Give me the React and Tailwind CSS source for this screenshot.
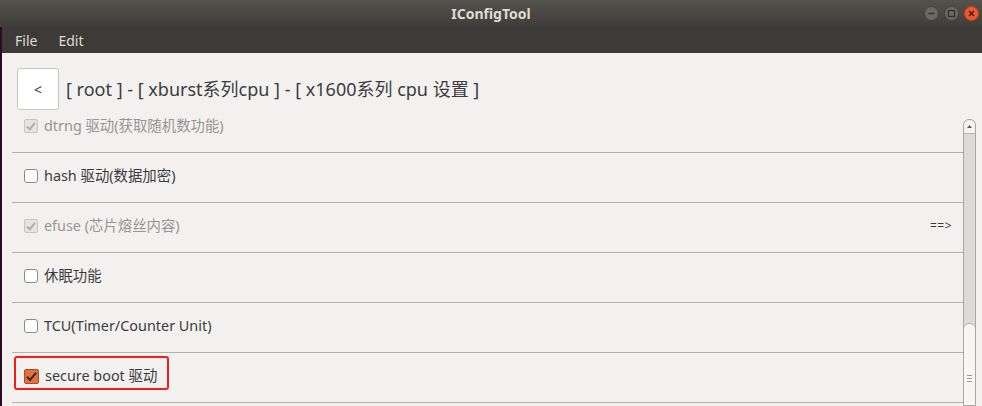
import { useState } from "react";

const rows = [
  { label: "dtrng 驱动(获取随机数功能)", checked: true, disabled: true },
  { label: "hash 驱动(数据加密)", checked: false },
  { label: "efuse (芯片熔丝内容)", checked: true, disabled: true, more: true },
  { label: "休眠功能", checked: false },
  { label: "TCU(Timer/Counter Unit)", checked: false },
  { label: "secure boot 驱动", checked: true, highlight: true },
];

const Check = ({ checked, disabled }) => {
  if (disabled) {
    return (
      <span className="w-[14px] h-[14px] rounded-[2px] border border-[#c8c6c3] bg-[#e6e4e1] flex items-center justify-center">
        <svg width="12" height="12" viewBox="0 0 12 12">
          <path d="M2 6.5 L4.8 9.2 L10 2.8" fill="none" stroke="#b0aeab" strokeWidth="2" />
        </svg>
      </span>
    );
  }
  if (checked) {
    return (
      <span className="w-[15px] h-[15px] rounded-[2px] border border-[#b8461c] bg-[#e5703f] flex items-center justify-center">
        <svg width="13" height="13" viewBox="0 0 12 12">
          <path d="M1.8 6.2 L4.6 9.2 L10.4 2.4" fill="none" stroke="#3b2a22" strokeWidth="2" />
        </svg>
      </span>
    );
  }
  return <span className="w-[14px] h-[14px] rounded-[3px] border border-[#8c8a86] bg-white" />;
};

const Row = ({ row }) => {
  const [checked, setchecked] = useState(row.checked);
  return (
    <div className="h-[50px] flex items-center border-b border-[#b3b1ae] pr-[11px]">
      <label
        className={
          "flex items-center gap-[6px] " +
          (row.highlight
            ? "self-start mt-[3px] h-[34px] pt-[6px] ml-[2px] pl-[8px] pr-[10px] rounded-[3px] border-2 border-[#f01e1e]"
            : "pl-[12px] -mt-[3px]")
        }
        onClick={() => !row.disabled && setchecked(!checked)}
      >
        <Check checked={checked} disabled={row.disabled} />
        <span className={"text-[14.4px] " + (row.disabled ? "text-[#979592]" : "text-[#3c3c3c]")}>
          {row.label}
        </span>
      </label>
      {row.more && <span className="ml-auto -mt-[3px] text-[12px] text-[#3c3c3c] tracking-[0.5px]">==&gt;</span>}
    </div>
  );
};

const WinButton = ({ kind }) => (
  <span
    className={
      "w-[15px] h-[15px] rounded-full flex items-center justify-center border " +
      (kind === "close"
        ? "bg-[#ec5a2a] border-[#b8431c]"
        : "bg-[#6a6864] border-[#44423e]")
    }
  >
    <svg width="9" height="9" viewBox="0 0 9 9">
      {kind === "min" && <path d="M1.5 4.5 H7.5" stroke="#2e2d2a" strokeWidth="1.3" />}
      {kind === "max" && <rect x="1.5" y="1.5" width="6" height="6" fill="none" stroke="#2e2d2a" strokeWidth="1.2" />}
      {kind === "close" && <path d="M2 2 L7 7 M7 2 L2 7" stroke="#3a1a0c" strokeWidth="1.4" />}
    </svg>
  </span>
);

export default function App() {
  return (
    <div
      className="w-[982px] h-[406px] overflow-hidden bg-[#2c0a22] flex flex-col"
      style={{ fontFamily: '"Noto Sans", "Noto Sans CJK SC", sans-serif' }}
    >
      {/* title bar */}
      <div className="h-[27px] shrink-0 bg-gradient-to-b from-[#55534e] to-[#3f3d39] flex items-center relative">
        <div className="flex-1 text-center text-[14px] font-bold text-[#dfdbd2]">IConfigTool</div>
        <div className="absolute right-[3px] top-[6px] flex gap-[5px]">
          <WinButton kind="min" />
          <WinButton kind="max" />
          <WinButton kind="close" />
        </div>
      </div>

      {/* menu bar */}
      <div className="h-[26px] shrink-0 bg-[#3c3b37] flex items-center gap-[21px] pl-[13px] text-[14px] text-[#dfdbd2] ml-[2px]">
        <span>File</span>
        <span>Edit</span>
      </div>

      <div className="flex-1 bg-[#f2f1f0] ml-[2px] flex flex-col min-h-0">
        {/* header */}
        <div className="h-[60px] shrink-0 flex items-center pl-[15px] pt-[14px] pb-[2px]">
          <button className="w-[42px] h-[42px] rounded-[3px] border border-[#c7c5c2] bg-white text-[14px] text-[#3c3c3c]">
            &lt;
          </button>
          <span className="ml-[7px] text-[18px] text-[#3c3c3c]">
            [ root ] - [ xburst系列cpu ] - [ x1600系列 cpu 设置 ]
          </span>
        </div>

        {/* list + scrollbar */}
        <div className="flex-1 flex min-h-0 pl-[10px] pr-[6px]">
          <div className="flex-1 overflow-hidden">
            <div className="-mt-[10px]">
              {rows.map((row) => (
                <Row key={row.label} row={row} />
              ))}
            </div>
          </div>
          <div className="w-[13px] shrink-0 mt-[6px] flex flex-col rounded-t-[6px] border border-[#a9a7a4] bg-[#dcdad7] overflow-hidden">
            <div className="h-[14px] bg-[#f4f3f2] rounded-t-[6px] border-b border-[#b7b5b2] flex items-center justify-center">
              <svg width="5" height="3" viewBox="0 0 5 3">
                <path d="M0 3 L2.5 0 L5 3 Z" fill="#5a5855" />
              </svg>
            </div>
            <div className="h-[189px] bg-[#dddbd8]" />
            <div className="flex-1 bg-[#f7f6f5] rounded-t-[6px] border-t border-[#a9a7a4] flex flex-col items-center pt-[51px] gap-[2px]">
              <span className="w-[5px] h-px bg-[#9a9895]" />
              <span className="w-[5px] h-px bg-[#9a9895]" />
              <span className="w-[5px] h-px bg-[#9a9895]" />
            </div>
          </div>
        </div>
      </div>
    </div>
  );
}
